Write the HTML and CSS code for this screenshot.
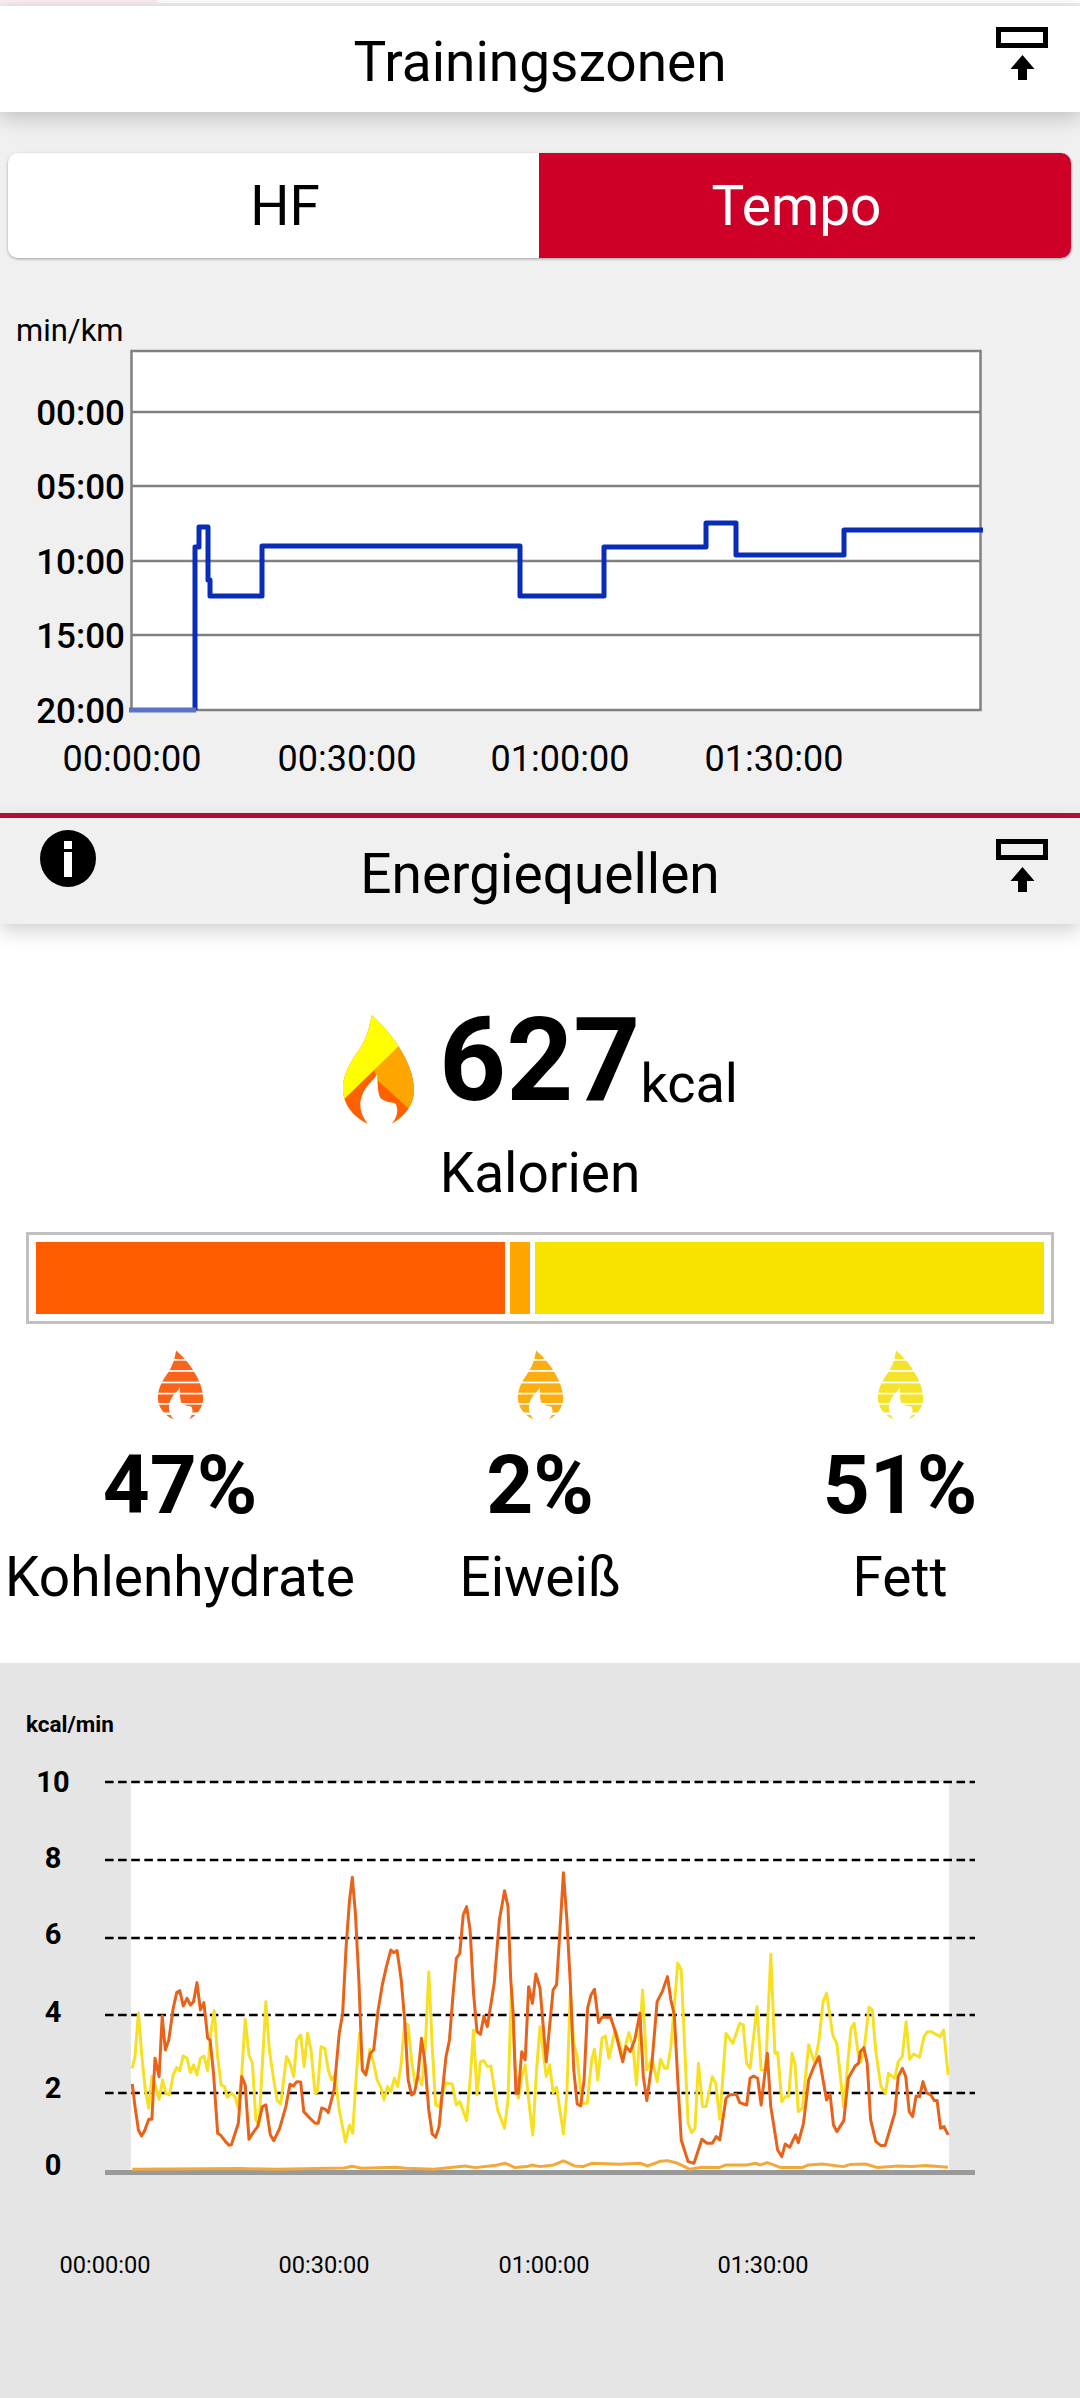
FILE: index.html
```html
<!DOCTYPE html>
<html lang="de">
<head>
    <meta charset="UTF-8">
    <title>Trainingszonen</title>
    <link rel="stylesheet" href="styles.css">
</head>
<body>
    <svg class="icon-defs" width="0" height="0">
        <defs>
            <path id="flame-outline" d="M187 72 C178 120 170 150 140 190 C115 225 98 265 100 300 C102 345 130 380 175 402 C150 370 145 335 165 300 C180 275 200 265 205 245 C205 280 205 310 215 325 C235 340 262 335 262 345 C270 365 262 385 248 402 C290 380 318 340 316 295 C314 220 250 125 187 72 Z"/>
            <clipPath id="flame-clip"><use href="#flame-outline"/></clipPath>
            <g id="flame-striped">
                <use href="#flame-outline" fill="currentColor"/>
                <rect class="flame-stripe" x="80" y="113" width="260" height="8"/>
                <rect class="flame-stripe" x="80" y="166" width="260" height="8"/>
                <rect class="flame-stripe" x="80" y="221" width="260" height="8"/>
                <rect class="flame-stripe" x="80" y="274" width="260" height="8"/>
                <rect class="flame-stripe" x="80" y="323" width="260" height="8"/>
                <rect class="flame-stripe" x="80" y="368" width="260" height="12"/>
            </g>
            <g id="export-icon">
                <rect x="2.5" y="2.5" width="47" height="16" fill="none" stroke="#000" stroke-width="5"/>
                <path d="M26.5 28 L38.5 42 L31 42 L31 53 L22 53 L22 42 L14.5 42 Z" fill="#000"/>
            </g>
        </defs>
    </svg>

    <div class="status-strip"><div class="status-progress"></div></div>

    <header class="bar bar-white">
        <div></div>
        <h1>Trainingszonen</h1>
        <svg class="export-icon" viewBox="0 0 52 53"><use href="#export-icon"/></svg>
    </header>

    <div class="toggle">
        <div class="toggle-item toggle-hf">HF</div>
        <div class="toggle-item toggle-tempo">Tempo</div>
    </div>

    <svg class="pace-chart" viewBox="0 300 1080 513">
        <text class="pace-unit" x="16" y="341">min/km</text>
        <rect x="131.5" y="351" width="849" height="359" fill="#fff" stroke="#808080" stroke-width="2.5"/>
        <g stroke="#808080" stroke-width="2.5">
            <line x1="131" x2="981" y1="412" y2="412"/>
            <line x1="131" x2="981" y1="486" y2="486"/>
            <line x1="131" x2="981" y1="561" y2="561"/>
            <line x1="131" x2="981" y1="635" y2="635"/>
        </g>
        <g class="pace-label pace-label-y" text-anchor="end">
            <text x="125" y="425">00:00</text>
            <text x="125" y="499">05:00</text>
            <text x="125" y="574">10:00</text>
            <text x="125" y="648">15:00</text>
            <text x="125" y="723">20:00</text>
        </g>
        <g class="pace-label" text-anchor="middle">
            <text x="132" y="771">00:00:00</text>
            <text x="347" y="771">00:30:00</text>
            <text x="560" y="771">01:00:00</text>
            <text x="774" y="771">01:30:00</text>
        </g>
        <polyline class="pace-line" points="195,710 195,547 199,547 199,527 208,527 208,580 210,580 210,596 262,596 262,546 520,546 520,596 604,596 604,547 706,547 706,523 736,523 736,555 844,555 844,530 983,530"/>
        <line class="pace-start" x1="129" x2="196" y1="710" y2="710"/>
    </svg>

    <div class="red-rule"></div>

    <header class="bar bar-grey">
        <svg class="info-icon" viewBox="0 0 56 57">
            <ellipse cx="28" cy="28.5" rx="28" ry="28.5" fill="#000"/>
            <rect x="24" y="11" width="8" height="8" fill="#fff"/>
            <rect x="24" y="22" width="8" height="25" fill="#fff"/>
        </svg>
        <h2>Energiequellen</h2>
        <svg class="export-icon" viewBox="0 0 52 53"><use href="#export-icon"/></svg>
    </header>

    <section class="energy">
        <div class="calories">
            <svg class="flame-big" viewBox="97 70 222 334">
                <g clip-path="url(#flame-clip)">
                    <rect x="80" y="60" width="260" height="350" fill="#ff6000"/>
                    <polygon points="270,165 195,238 205,270 295,352 340,385 340,106" fill="#ffa500"/>
                    <polygon points="60,60 340,60 340,97 60,370" fill="#ffff00"/>
                </g>
            </svg>
            <div class="calories-value">627</div>
            <div class="calories-unit">kcal</div>
        </div>
        <div class="calories-label">Kalorien</div>

        <div class="share-bar">
            <div class="share share-carb"></div>
            <div class="share share-protein"></div>
            <div class="share share-fat"></div>
        </div>

        <div class="macros">
            <div class="macro">
                <svg class="flame-small carb" viewBox="97 70 222 334"><use href="#flame-striped"/></svg>
                <div class="macro-value">47%</div>
                <div class="macro-name">Kohlenhydrate</div>
            </div>
            <div class="macro">
                <svg class="flame-small protein" viewBox="97 70 222 334"><use href="#flame-striped"/></svg>
                <div class="macro-value">2%</div>
                <div class="macro-name">Eiweiß</div>
            </div>
            <div class="macro">
                <svg class="flame-small fat" viewBox="97 70 222 334"><use href="#flame-striped"/></svg>
                <div class="macro-value">51%</div>
                <div class="macro-name">Fett</div>
            </div>
        </div>
    </section>

    <section class="burn">
        <svg class="burn-chart" viewBox="0 1663 1080 735">
            <text class="burn-unit" x="26" y="1732">kcal/min</text>
            <rect x="131" y="1782" width="818" height="390" fill="#fff"/>
            <g class="burn-grid">
                <line x1="105" x2="975" y1="1782" y2="1782"/>
                <line x1="105" x2="975" y1="1860" y2="1860"/>
                <line x1="105" x2="975" y1="1938" y2="1938"/>
                <line x1="105" x2="975" y1="2015" y2="2015"/>
                <line x1="105" x2="975" y1="2093" y2="2093"/>
            </g>
            <g class="burn-label" text-anchor="middle">
                <text x="53" y="1792">10</text>
                <text x="53" y="1868">8</text>
                <text x="53" y="1944">6</text>
                <text x="53" y="2022">4</text>
                <text x="53" y="2098">2</text>
                <text x="53" y="2175">0</text>
            </g>
            <rect x="105" y="2170" width="870" height="5" fill="#999"/>
            <!-- traced in crop coordinates: 2.903 units per px across, 3 down -->
            <g transform="translate(0 1680) scale(0.3444 0.3333)">
                <polyline class="burn-line line-fat" points="384,1165 392,1130 402,998 412,1130 422,1230 432,1285 441,1190 452,1220 462,1258 472,1200 482,1240 492,1245 503,1185 513,1163 522,1172 532,1128 543,1135 553,1178 562,1155 572,1185 582,1135 592,1128 603,1172 612,1060 622,992 632,1130 642,1215 652,1220 660,1252 672,1240 682,1250 692,1285 702,1180 712,1018 723,1125 733,1150 743,1320 752,1335 762,1150 772,965 782,1110 795,1200 805,1262 815,1272 832,1130 842,1150 853,1190 862,1080 873,1065 883,1160 893,1060 903,1110 915,1240 922,1235 932,1100 943,1105 953,1170 963,1200 973,1185 985,1290 1003,1385 1015,1335 1024,1360 1035,1180 1044,1060 1054,1170 1064,1180 1074,1108 1085,1150 1095,1200 1105,1220 1115,1260 1125,1220 1135,1235 1145,1195 1155,1220 1165,1150 1175,1030 1185,1035 1195,1140 1205,1210 1215,1190 1225,1215 1235,1100 1245,875 1255,1100 1265,1275 1275,1280 1285,1240 1295,1210 1313,1212 1325,1275 1335,1265 1355,1322 1365,1200 1375,1050 1385,1245 1395,1145 1405,1142 1415,1160 1425,1158 1445,1290 1465,1345 1475,1260 1485,920 1495,1150 1505,1255 1515,1190 1525,1155 1535,1260 1547,1365 1558,1170 1568,1040 1586,1190 1596,1155 1606,1238 1616,1222 1636,1362 1646,1240 1656,935 1666,1090 1676,1130 1690,1270 1705,1270 1718,1140 1726,1108 1736,1200 1748,1075 1758,1068 1768,1135 1786,1050 1798,1085 1808,1130 1826,1058 1838,1100 1848,1215 1866,930 1878,1170 1893,1135 1908,1205 1918,1138 1930,1165 1938,1165 1948,1100 1968,850 1978,870 1988,1100 1998,1330 2008,1358 2018,1345 2028,1150 2040,1280 2050,1280 2068,1190 2078,1210 2090,1318 2108,1060 2128,1090 2148,1030 2158,1035 2168,1150 2178,1165 2198,980 2210,1170 2223,1170 2238,822 2250,1120 2258,1118 2270,1265 2280,1250 2290,1250 2300,1120 2308,1150 2318,1295 2330,1285 2348,1095 2366,1150 2378,1080 2390,965 2400,940 2418,1065 2430,1092 2450,1282 2471,1045 2480,1030 2493,1130 2500,1145 2510,1100 2523,982 2533,990 2543,1115 2558,1220 2571,1240 2580,1180 2598,1195 2608,1145 2620,1130 2631,1025 2641,1138 2653,1122 2670,1132 2683,1070 2693,1055 2703,1055 2730,1070 2740,1050 2753,1185"/>
                <polyline class="burn-line line-carb" points="384,1212 392,1280 402,1350 411,1368 420,1352 432,1318 441,1318 450,1135 462,1190 471,1008 480,1110 490,1080 503,985 513,938 522,932 532,978 543,955 553,975 562,965 572,908 582,990 592,968 603,1075 610,1080 620,1180 632,1360 640,1365 655,1385 665,1396 672,1394 692,1330 702,1190 712,1215 723,1378 735,1358 748,1340 762,1280 772,1275 785,1365 795,1382 812,1345 830,1280 842,1213 852,1218 862,1205 873,1206 882,1295 900,1315 915,1330 924,1330 934,1284 945,1288 953,1298 970,1230 985,1060 995,1000 1005,800 1015,660 1023,592 1032,700 1042,900 1052,1170 1062,1185 1075,1120 1085,1110 1098,990 1110,915 1122,860 1135,810 1143,818 1153,812 1165,900 1175,1020 1185,1200 1195,1245 1203,1240 1213,1190 1224,1075 1234,1150 1245,1290 1255,1362 1265,1372 1275,1340 1285,1230 1295,1130 1305,1080 1315,950 1325,835 1335,820 1345,705 1355,680 1365,750 1375,940 1385,1055 1395,1063 1405,1008 1415,1040 1435,910 1450,720 1465,632 1475,680 1483,900 1490,1000 1498,1240 1505,1240 1515,1115 1525,1140 1535,920 1546,970 1556,882 1568,925 1586,1145 1606,930 1616,915 1626,750 1636,578 1646,720 1656,910 1666,1170 1676,1272 1686,1278 1696,1200 1706,985 1716,945 1726,928 1738,1028 1748,1012 1773,1012 1788,1060 1808,1145 1818,1100 1830,1115 1843,1080 1858,1000 1868,1190 1878,1262 1893,1150 1908,965 1923,935 1938,890 1948,960 1958,1005 1968,1200 1978,1380 1998,1445 2015,1450 2038,1378 2053,1390 2068,1390 2080,1370 2090,1380 2108,1255 2118,1245 2138,1243 2148,1268 2168,1275 2178,1195 2188,1188 2200,1195 2210,1275 2228,1120 2238,1280 2258,1410 2270,1430 2280,1392 2293,1402 2310,1365 2318,1388 2333,1330 2348,1200 2363,1160 2378,1130 2400,1260 2410,1242 2420,1335 2430,1355 2450,1322 2463,1195 2483,1158 2493,1150 2498,1115 2508,1103 2518,1150 2528,1320 2543,1385 2558,1397 2570,1397 2598,1300 2608,1190 2620,1165 2630,1190 2640,1295 2650,1310 2660,1248 2670,1250 2680,1205 2690,1238 2703,1245 2713,1262 2721,1262 2731,1345 2741,1340 2753,1365"/>
                <polyline class="burn-line line-protein" points="384,1468 700,1466 800,1468 1000,1464 1022,1459 1050,1465 1150,1462 1180,1465 1260,1468 1350,1458 1380,1463 1440,1456 1468,1450 1495,1463 1530,1460 1545,1455 1568,1460 1608,1455 1636,1443 1668,1458 1693,1460 1718,1450 1798,1453 1858,1450 1880,1458 1918,1444 1938,1442 1968,1450 2003,1468 2038,1462 2088,1463 2108,1455 2168,1455 2193,1450 2208,1455 2228,1448 2268,1463 2328,1463 2348,1455 2388,1452 2448,1460 2468,1454 2513,1452 2548,1463 2608,1458 2648,1460 2688,1457 2753,1462"/>
            </g>
            <g class="burn-time" text-anchor="middle">
                <text x="105" y="2273">00:00:00</text>
                <text x="324" y="2273">00:30:00</text>
                <text x="544" y="2273">01:00:00</text>
                <text x="763" y="2273">01:30:00</text>
            </g>
        </svg>
    </section>
</body>
</html>
```

FILE: styles.css
```css
* {
    box-sizing: border-box;
}

html, body {
    margin: 0;
    padding: 0;
}

body {
    width: 1080px;
    height: 2398px;
    overflow: hidden;
    background-color: #f0f0f0;
    color: #000;
    font-family: "Roboto", "Liberation Sans", sans-serif;
}

.icon-defs {
    position: absolute;
}

.status-strip {
    height: 6px;
    background-color: #fff;
    border-bottom: 3px solid #efefef;
}

.status-progress {
    width: 158px;
    height: 3px;
    background-color: #fdeef6;
}

/* section headers */
.bar {
    position: relative;
    z-index: 2;
    height: 106px;
    display: grid;
    grid-template-columns: 1fr auto 1fr;
    box-shadow: 0 6px 20px rgba(0, 0, 0, 0.2);
}

.bar-white {
    background-color: #fff;
}

.bar-grey {
    background-color: #f0f0f0;
}

.bar h1, .bar h2 {
    margin: 0;
    padding-top: 6px;
    font-size: 55px;
    font-weight: 400;
    line-height: 100px;
}

.export-icon {
    justify-self: end;
    width: 52px;
    height: 53px;
    margin: 21px 32px 0 0;
}

.info-icon {
    width: 56px;
    height: 57px;
    margin: 12px 0 0 40px;
}

/* HF / Tempo switch */
.toggle {
    display: flex;
    height: 105px;
    margin: 41px 9px 0 8px;
    border-radius: 10px;
    box-shadow: 0 1px 3px rgba(0, 0, 0, 0.35);
    overflow: hidden;
}

.toggle-item {
    text-align: center;
    font-size: 55px;
    line-height: 107px;
}

.toggle-hf {
    flex: 0 0 531px;
    padding-left: 23px;
    background-color: #fff;
}

.toggle-tempo {
    flex: 0 0 532px;
    padding-right: 17px;
    background-color: #ce0028;
    color: #fff;
}

/* pace chart */
.pace-chart {
    display: block;
    width: 1080px;
    height: 513px;
    margin-top: 42px;
}

.pace-unit {
    font-size: 31px;
}

.pace-label {
    font-size: 36px;
}

.pace-label-y {
    font-size: 35px;
    font-weight: 500;
}

.pace-line {
    fill: none;
    stroke: #0a2db8;
    stroke-width: 5;
    stroke-linejoin: round;
}

.pace-start {
    stroke: #5a73c6;
    stroke-width: 5;
}

.red-rule {
    height: 5px;
    background-color: #b7102f;
}

/* energy summary */
.energy {
    height: 739px;
    padding-top: 89px;
    background-color: #fff;
}

.calories {
    display: flex;
    align-items: flex-end;
    height: 112px;
    padding-left: 342px;
}

.flame-big {
    width: 73px;
    height: 111px;
}

.calories-value {
    margin: 0 0 9px 24px;
    font-size: 117px;
    font-weight: 700;
    line-height: 112px;
}

.calories-unit {
    margin: 0 0 4px 0;
    font-size: 54px;
    line-height: 74px;
}

.calories-label {
    margin-top: 16px;
    text-align: center;
    font-size: 55px;
    line-height: 64px;
}

.share-bar {
    display: flex;
    gap: 5px;
    height: 92px;
    margin: 27px 26px 0;
    padding: 7px;
    border: 3px solid #c0c0c0;
}

.share-carb {
    width: 469px;
    background-color: #ff5c00;
}

.share-protein {
    width: 20px;
    background-color: #ffa500;
}

.share-fat {
    flex: 1;
    background-color: #f7e200;
}

.macros {
    display: grid;
    grid-template-columns: repeat(3, 1fr);
    margin-top: 26px;
    text-align: center;
}

.flame-small {
    display: block;
    width: 47px;
    height: 70px;
    margin: 0 auto;
}

.flame-stripe {
    fill: #fff;
}

.carb {
    color: #f9641a;
}

.protein {
    color: #fbae12;
}

.fat {
    color: #f5e22a;
}

.macro-value {
    margin-top: 23px;
    font-size: 82px;
    font-weight: 700;
    line-height: 84px;
}

.macro-name {
    margin-top: 18px;
    font-size: 55px;
    line-height: 64px;
}

/* calories per minute chart */
.burn {
    height: 735px;
    background-color: #e5e5e5;
}

.burn-chart {
    display: block;
    width: 1080px;
    height: 735px;
}

.burn-unit {
    font-size: 22.5px;
    font-weight: 700;
}

.burn-grid line {
    stroke: #000;
    stroke-width: 2.5;
    stroke-dasharray: 8.6 4.5;
}

.burn-label {
    font-size: 29px;
    font-weight: 700;
}

.burn-line {
    fill: none;
    stroke-width: 3;
    stroke-linejoin: round;
    vector-effect: non-scaling-stroke;
}

.line-carb {
    stroke: #e8621a;
}

.line-fat {
    stroke: #f7e024;
}

.line-protein {
    stroke: #f2a93a;
}

.burn-time {
    font-size: 23.6px;
}
```
